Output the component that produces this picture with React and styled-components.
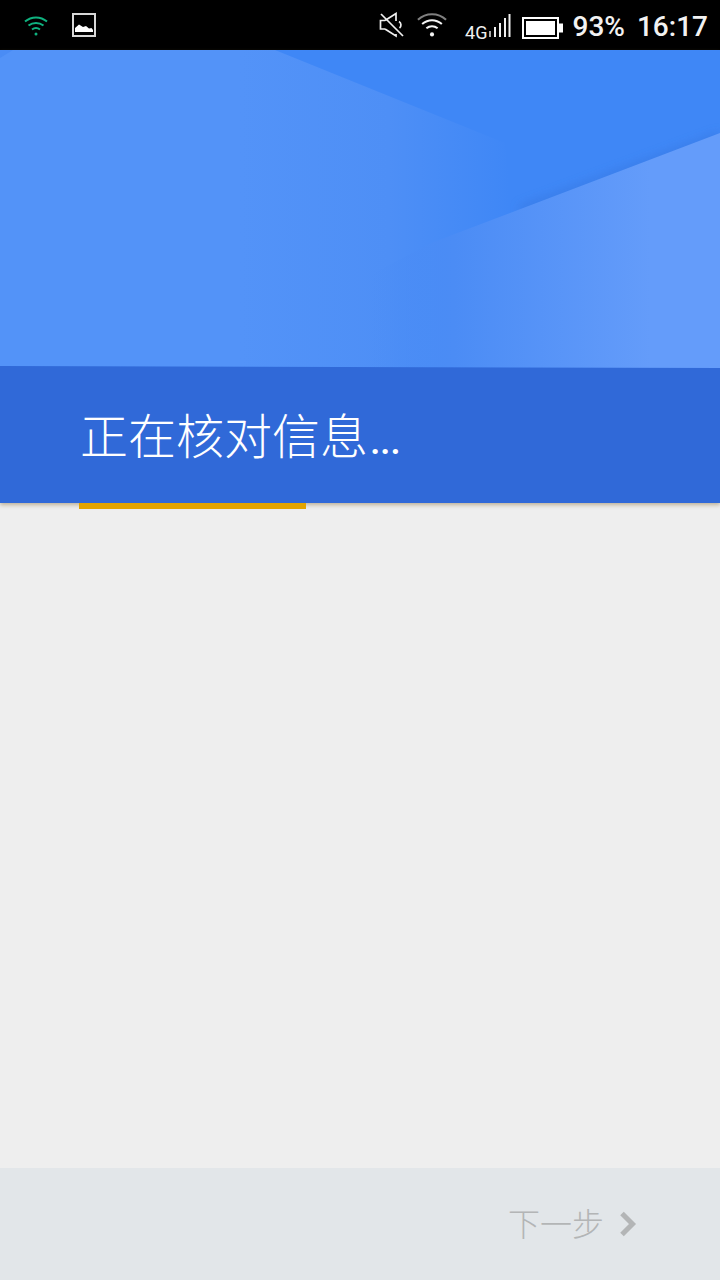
import React from 'react';
import styled, { createGlobalStyle } from 'styled-components';

const GlobalStyle = createGlobalStyle`
  html, body {
    margin: 0;
    padding: 0;
    background: #eeeeee;
  }
  * {
    box-sizing: border-box;
  }
`;

const Screen = styled.div`
  width: 720px;
  height: 1280px;
  display: flex;
  flex-direction: column;
  background: #eeeeee;
  font-family: "Noto Sans CJK SC", "Noto Sans", sans-serif;
  overflow: hidden;
`;

const StatusBar = styled.div`
  height: 50px;
  flex: none;
  background: #000;
  display: flex;
  align-items: center;
  justify-content: space-between;
  padding: 0 12px 0 23px;
`;

const StatusGroup = styled.div`
  display: flex;
  align-items: center;
`;

const StatusText = styled.span`
  font-family: Roboto, "Noto Sans", sans-serif;
  font-size: 28px;
  font-weight: 500;
  line-height: 50px;
  color: #f2f2f2;
  margin: 3px 0 0 ${p => p.$gap || 0}px;
`;

const NetworkLabel = styled.span`
  font-family: Roboto, "Noto Sans", sans-serif;
  font-size: 18px;
  line-height: 20px;
  color: #f0f0f0;
  margin: 15px 0 0 18px;
`;

const StatusIcon = styled.svg`
  display: block;
  flex: none;
  margin: ${p => p.$top || 0}px 0 0 ${p => p.$gap || 0}px;
`;

const Header = styled.div`
  height: 453px;
  flex: none;
  display: flex;
  flex-direction: column;
  position: relative;
  z-index: 1;
  box-shadow: 0 2px 4px rgba(130, 105, 50, 0.45);
`;

const Hero = styled.svg`
  display: block;
  flex: none;
  width: 720px;
  height: 318px;
`;

const TitleBand = styled.div`
  flex: 1;
  background: #3069d8;
  padding-left: 80px;
  display: flex;
  align-items: center;
`;

const Title = styled.h1`
  margin: 3px 0 0;
  font-size: 48px;
  line-height: 60px;
  font-weight: 300;
  color: #fff;
  white-space: nowrap;
`;

const Dots = styled.span`
  font-family: Roboto, sans-serif;
  font-size: 38px;
  font-weight: 500;
  letter-spacing: -0.5px;
  margin-left: 2px;
`;

const Progress = styled.div`
  flex: none;
  width: 227px;
  height: 6px;
  margin-left: 79px;
  background: #e3a400;
  position: relative;
  z-index: 2;
`;

const Body = styled.div`
  flex: 1;
`;

const Footer = styled.div`
  height: 112px;
  flex: none;
  background: #e2e6e9;
  display: flex;
  align-items: center;
  justify-content: flex-end;
  padding-right: 83px;
`;

const NextLabel = styled.span`
  font-size: 32px;
  font-weight: 300;
  line-height: 40px;
  color: #b3b5b6;
  margin-bottom: 4px;
`;

const NextIcon = styled.svg`
  display: block;
  margin-left: 15px;
`;

const App = () => (
  <Screen>
    <GlobalStyle />
    <StatusBar>
      <StatusGroup>
        <StatusIcon width="26" height="22" viewBox="0 0 26 22" fill="none" stroke="#0fb27f" strokeWidth="2">
          <path d="M2 7.5C8.5 2 17.5 2 24 7.5" />
          <path d="M5.5 11.5C10 8 16 8 20.5 11.5" />
          <path d="M9 15.5C11.5 13.6 14.5 13.6 17 15.5" />
          <circle cx="13" cy="20" r="1.5" fill="#0fb27f" stroke="none" />
        </StatusIcon>
        <StatusIcon $gap={23} width="24" height="24" viewBox="0 0 24 24" fill="none">
          <rect x="1" y="1" width="22" height="22" stroke="#d8d8d8" strokeWidth="2" />
          <path d="M3 19V15L7 11.5L11 14L14 13L17 15.5L19.5 15L21 17V19Z" fill="#fff" />
        </StatusIcon>
      </StatusGroup>
      <StatusGroup>
        <StatusIcon width="26" height="26" viewBox="0 0 26 26" fill="none" stroke="#f0f0f0" strokeWidth="1.7">
          <path d="M6 8.5H1.5V17H6" />
          <path d="M6 8.5L17 1.5V9" />
          <path d="M6 17L17 24V22" />
          <path d="M2 2L24 24" />
          <path d="M20 9.5C22.5 11 22.5 14.5 20.5 16" />
        </StatusIcon>
        <StatusIcon $gap={12} width="30" height="26" viewBox="0 0 32 26" fill="none" stroke="#f4f4f4" strokeWidth="2.2">
          <path d="M1 7.5C9.5 -0.5 22.5 -0.5 31 7.5" stroke="#808080" />
          <path d="M5.5 12C12 6.5 20 6.5 26.5 12" />
          <path d="M10 16.5C13.5 13.8 18.5 13.8 22 16.5" />
          <circle cx="16" cy="23" r="2.2" fill="#f4f4f4" stroke="none" />
        </StatusIcon>
        <NetworkLabel>4G</NetworkLabel>
        <StatusIcon $gap={-1} $top={2} width="26" height="26" viewBox="0 0 26 26" fill="#f0f0f0">
          <rect x="2" y="18" width="2" height="6" fill="#aaa" />
          <rect x="7" y="14" width="2" height="10" />
          <rect x="12" y="10" width="2" height="14" />
          <rect x="17" y="5" width="2" height="19" />
          <rect x="21.5" y="1" width="2" height="23" />
        </StatusIcon>
        <StatusIcon $gap={9} $top={5} width="42" height="22" viewBox="0 0 42 22" fill="none">
          <rect x="1" y="1" width="35" height="20" stroke="#fff" strokeWidth="2" />
          <rect x="4" y="4" width="29" height="14" fill="#fff" />
          <rect x="37" y="6.5" width="4" height="9" fill="#fff" />
        </StatusIcon>
        <StatusText $gap={9}>93%</StatusText>
        <StatusText $gap={12}>16:17</StatusText>
      </StatusGroup>
    </StatusBar>
    <Header>
      <Hero viewBox="0 0 720 318">
        <defs>
          <linearGradient id="leftFade" gradientUnits="userSpaceOnUse" x1="240" x2="510" y1="0" y2="0">
            <stop offset="0" stopColor="#5393f8" />
            <stop offset="0.55" stopColor="#4e8ff6" />
            <stop offset="1" stopColor="#4e8ff6" stopOpacity="0" />
          </linearGradient>
          <linearGradient id="rightFade" gradientUnits="userSpaceOnUse" x1="370" x2="650" y1="0" y2="0">
            <stop offset="0" stopColor="#4a8cf5" stopOpacity="0" />
            <stop offset="0.3" stopColor="#4b8cf5" />
            <stop offset="1" stopColor="#649cfa" />
          </linearGradient>
          <filter id="soft" x="-10%" y="-50%" width="120%" height="200%">
            <feGaussianBlur stdDeviation="5" />
          </filter>
        </defs>
        <rect width="720" height="318" fill="#3f87f6" />
        <polygon points="0,0 275,0 505,93 530,318 0,318" fill="url(#leftFade)" />
        <polygon points="0,8 13,0 0,0" fill="#4a8cf5" />
        <line x1="520" y1="160" x2="720" y2="86" stroke="#3473dc" strokeWidth="8" opacity="0.55" filter="url(#soft)" />
        <polygon points="720,83 431,193 370,225 370,318 720,318" fill="url(#rightFade)" />
        <polygon points="0,316 720,318 0,318" fill="#3069d8" />
      </Hero>
      <TitleBand>
        <Title>正在核对信息<Dots>...</Dots></Title>
      </TitleBand>
    </Header>
    <Progress />
    <Body />
    <Footer>
      <NextLabel>下一步</NextLabel>
      <NextIcon width="18" height="26" viewBox="0 0 18 26" fill="none" stroke="#b3b5b6" strokeWidth="5">
        <path d="M3 2.5L13.5 13L3 23.5" />
      </NextIcon>
    </Footer>
  </Screen>
);

export default App;
